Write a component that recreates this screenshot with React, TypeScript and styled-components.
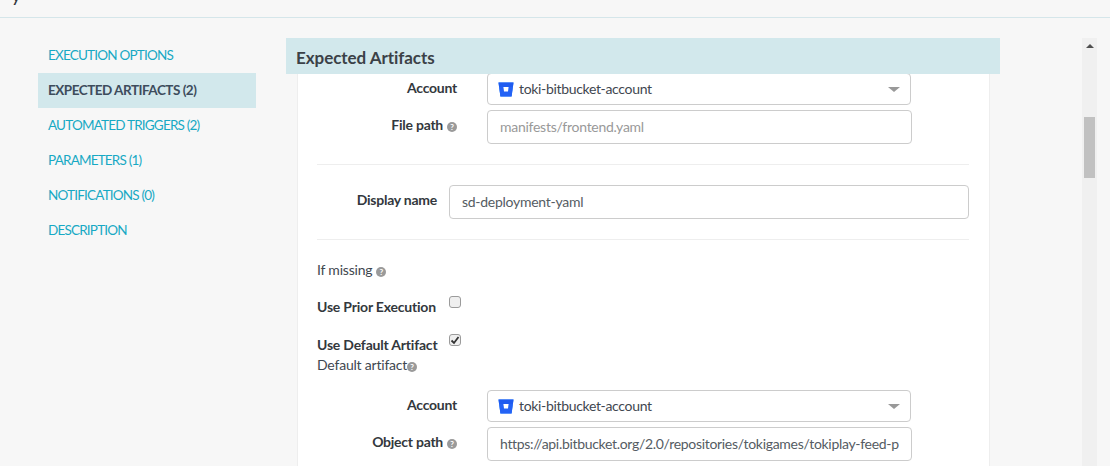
import React from 'react';
import styled, { createGlobalStyle } from 'styled-components';

const GlobalStyle = createGlobalStyle`
    html, body {
        margin: 0;
        height: 100%;
        overflow: hidden;
        background: #f7f7f7;
        font-family: 'Lato', 'Noto Sans', sans-serif;
        font-size: 14px;
        color: #33383d;
    }
    * {
        box-sizing: border-box;
    }
`;

const Page = styled.div`
    width: 1110px;
    height: 466px;
    overflow: hidden;
    display: flex;
    flex-direction: column;
`;

const Header = styled.header`
    height: 18px;
    flex: none;
    overflow: hidden;
    padding-left: 11px;
    border-bottom: 1px solid #d5e6ea;
`;

const HeaderTitle = styled.div`
    margin-top: -18px;
    font-size: 20px;
    line-height: 24px;
    color: #33383d;
`;

const Body = styled.div`
    flex: 1;
    min-height: 0;
    display: flex;
    padding-top: 20px;
`;

const Nav = styled.nav`
    width: 218px;
    margin-left: 38px;
    flex: none;
`;

const NavItem = styled.div<{ $active?: boolean }>`
    height: 35px;
    line-height: 34px;
    padding-left: 10px;
    font-size: 13.5px;
    letter-spacing: ${(p) => (p.$active ? '-0.5px' : '-0.8px')};
    white-space: nowrap;
    color: ${(p) => (p.$active ? '#3d4c5c' : '#17a9c4')};
    font-weight: ${(p) => (p.$active ? 700 : 400)};
    background: ${(p) => (p.$active ? '#d2e8ec' : 'transparent')};
`;

const Main = styled.main`
    width: 714px;
    margin-left: 30px;
    flex: none;
    display: flex;
    flex-direction: column;
`;

const SectionHeader = styled.h2`
    position: relative;
    z-index: 1;
    margin: 0;
    height: 36px;
    flex: none;
    padding: 9px 0 0 10px;
    background: #d2e8ec;
    font-size: 17px;
    line-height: 22px;
    font-weight: 700;
    letter-spacing: -0.05px;
    color: #3b4147;
`;

const Card = styled.section`
    flex: 1;
    width: 693px;
    margin: -1px 0 0 11px;
    padding: 0 20px 0 19px;
    background: #fff;
    border-left: 1px solid #eeeeee;
    border-right: 1px solid #eeeeee;
`;

const Row = styled.div<{ $top: number; $labelWidth: number; $gap: number; $fieldWidth: number }>`
    display: flex;
    align-items: flex-start;
    margin-top: ${(p) => p.$top}px;
    & > label {
        width: ${(p) => p.$labelWidth}px;
        margin-right: ${(p) => p.$gap}px;
    }
    & > div {
        width: ${(p) => p.$fieldWidth}px;
    }
`;

const FieldLabel = styled.label`
    flex: none;
    padding-top: 6px;
    text-align: right;
    font-size: 14px;
    line-height: 18px;
    font-weight: 700;
    letter-spacing: -0.25px;
    color: #33383d;
    white-space: nowrap;
`;

const Help = styled.span<{ $tight?: boolean }>`
    display: inline-block;
    width: 10px;
    height: 10px;
    margin-left: ${(p) => (p.$tight ? 0 : 4)}px;
    border-radius: 50%;
    background: #9a9a9a;
    color: #fff;
    font-size: 8px;
    line-height: 10px;
    font-weight: 700;
    text-align: center;
    letter-spacing: 0;
    vertical-align: 0;
`;

const SelectBox = styled.div`
    flex: none;
    height: 32px;
    display: flex;
    align-items: center;
    gap: 5px;
    padding: 0 10px 0 10px;
    background: #fff;
    border: 1px solid #cccccc;
    border-radius: 4px;
    font-size: 14px;
    color: #3f4750;
`;

const SelectText = styled.span`
    flex: 1;
    padding-bottom: 2px;
    letter-spacing: -0.33px;
`;

const Caret = styled.span`
    width: 0;
    height: 0;
    border-left: 6px solid transparent;
    border-right: 6px solid transparent;
    border-top: 5px solid #999;
`;

const TextBox = styled.div<{ $placeholder?: boolean }>`
    flex: none;
    height: 34px;
    line-height: 32px;
    padding: 0 12px;
    overflow: hidden;
    white-space: nowrap;
    background: #fff;
    border: 1px solid #cccccc;
    border-radius: 4px;
    font-size: 14px;
    letter-spacing: -0.27px;
    color: ${(p) => (p.$placeholder ? '#999999' : '#555c63')};
`;

const UrlText = styled.span`
    display: block;
    overflow: hidden;
    letter-spacing: -0.31px;
`;

const Divider = styled.hr<{ $top: number }>`
    margin: ${(p) => p.$top}px 0 0;
    height: 1px;
    border: 0;
    background: #eeeeee;
`;

const PlainLine = styled.div<{ $top: number }>`
    margin-top: ${(p) => p.$top}px;
    height: 18px;
    line-height: 18px;
    font-size: 14px;
    letter-spacing: -0.2px;
    color: #3f4750;
`;

const CheckRow = styled.div<{ $top: number; $height: number }>`
    display: flex;
    margin-top: ${(p) => p.$top}px;
    height: ${(p) => p.$height}px;
`;

const CheckLabel = styled.span`
    width: 132px;
    padding-top: 2px;
    line-height: 18px;
    font-weight: 700;
    letter-spacing: -0.2px;
    color: #33383d;
    white-space: nowrap;
`;

const Check = styled.span`
    width: 12px;
    height: 12px;
    display: flex;
    align-items: center;
    justify-content: center;
    border: 1px solid #9b9b9b;
    border-radius: 3px;
    background: #efefef;
`;

const Scrollbar = styled.div`
    position: relative;
    width: 15px;
    margin-left: 82px;
    flex: none;
    background: #f0f0f0;
`;

const ScrollUp = styled.span`
    position: absolute;
    top: 6px;
    left: 4px;
    border-left: 4px solid transparent;
    border-right: 4px solid transparent;
    border-bottom: 4px solid #505050;
`;

const ScrollThumb = styled.span`
    position: absolute;
    top: 79px;
    left: 2px;
    width: 11px;
    height: 61px;
    background: #c1c1c1;
`;

const BitbucketIcon: React.FC = () => (
    <svg width="16" height="15" viewBox="0 0 16 15" style={{ flex: 'none' }}>
        <path d="M0.5 0.5H15.5L13.6 14.5H2.4Z" fill="#2684ff" />
        <path d="M0.5 0.5H15.5L14.9 5H1.1Z" fill="#1f5bf0" />
        <path d="M2.4 14.5L1.1 5H14.9L13.6 14.5Z" fill="#2462f5" />
        <path d="M5.4 5H10.6L10 9.5H6Z" fill="#fff" />
    </svg>
);

const AccountSelect: React.FC = () => (
    <SelectBox>
        <BitbucketIcon />
        <SelectText>toki-bitbucket-account</SelectText>
        <Caret />
    </SelectBox>
);

const navItems = [
    'EXECUTION OPTIONS',
    'EXPECTED ARTIFACTS (2)',
    'AUTOMATED TRIGGERS (2)',
    'PARAMETERS (1)',
    'NOTIFICATIONS (0)',
    'DESCRIPTION',
];

export default function App() {
    return (
        <Page>
            <GlobalStyle />
            <Header>
                <HeaderTitle>y</HeaderTitle>
            </Header>
            <Body>
                <Nav>
                    {navItems.map((item, i) => (
                        <NavItem key={item} $active={i === 1}>
                            {item}
                        </NavItem>
                    ))}
                </Nav>
                <Main>
                    <SectionHeader>Expected Artifacts</SectionHeader>
                    <Card>
                        <Row $top={0} $labelWidth={140} $gap={30} $fieldWidth={424}>
                            <FieldLabel>Account</FieldLabel>
                            <AccountSelect />
                        </Row>
                        <Row $top={5} $labelWidth={140} $gap={30} $fieldWidth={425}>
                            <FieldLabel>
                                File path
                                <Help>?</Help>
                            </FieldLabel>
                            <TextBox $placeholder>manifests/frontend.yaml</TextBox>
                        </Row>
                        <Divider $top={20} />
                        <Row $top={20} $labelWidth={120} $gap={12} $fieldWidth={520}>
                            <FieldLabel>Display name</FieldLabel>
                            <TextBox>sd-deployment-yaml</TextBox>
                        </Row>
                        <Divider $top={20} />
                        <PlainLine $top={21}>
                            If missing
                            <Help>?</Help>
                        </PlainLine>
                        <CheckRow $top={17} $height={26}>
                            <CheckLabel>Use Prior Execution</CheckLabel>
                            <Check />
                        </CheckRow>
                        <CheckRow $top={12} $height={22}>
                            <CheckLabel>Use Default Artifact</CheckLabel>
                            <Check>
                                <svg width="10" height="10" viewBox="0 0 10 10">
                                    <path d="M1.5 5.5L4 8L8.5 2" fill="none" stroke="#333" strokeWidth="1.8" />
                                </svg>
                            </Check>
                        </CheckRow>
                        <PlainLine $top={0}>
                            Default artifact
                            <Help $tight>?</Help>
                        </PlainLine>
                        <Row $top={16} $labelWidth={140} $gap={30} $fieldWidth={424}>
                            <FieldLabel>Account</FieldLabel>
                            <AccountSelect />
                        </Row>
                        <Row $top={5} $labelWidth={140} $gap={30} $fieldWidth={425}>
                            <FieldLabel>
                                Object path
                                <Help>?</Help>
                            </FieldLabel>
                            <TextBox>
                                <UrlText>https://api.bitbucket.org/2.0/repositories/tokigames/tokiplay-feed-p</UrlText>
                            </TextBox>
                        </Row>
                    </Card>
                </Main>
                <Scrollbar>
                    <ScrollUp />
                    <ScrollThumb />
                </Scrollbar>
            </Body>
        </Page>
    );
}
